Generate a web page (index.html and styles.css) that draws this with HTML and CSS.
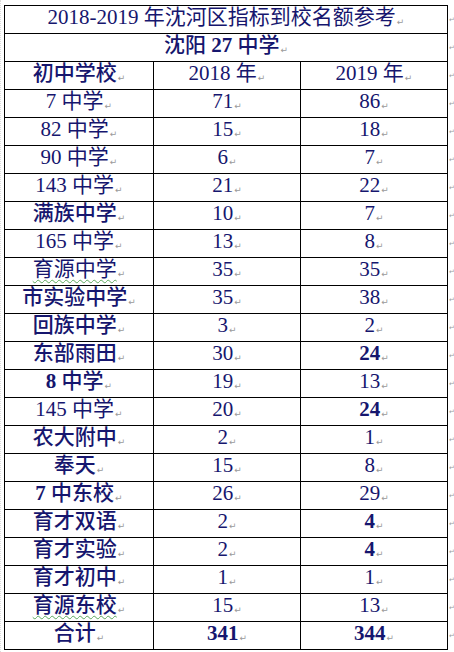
FILE: index.html
```html
<!DOCTYPE html>
<html lang="zh">
<head>
<meta charset="utf-8">
<link rel="stylesheet" href="styles.css">
</head>
<body>
<div class="page">
<table class="sheet">
  <colgroup>
    <col class="c1"><col class="c2"><col class="c3"><col class="c4">
  </colgroup>
  <tr><td colspan="3" class="title">2018-2019 年沈河区指标到校名额参考<span class="pm">↵</span></td><td class="end">↵</td></tr>
  <tr><td colspan="3" class="b">沈阳 <span class="bn">27</span> 中学<span class="pm">↵</span></td><td class="end">↵</td></tr>
  <tr><td class="b">初中学校<span class="pm">↵</span></td><td>2018 年<span class="pm">↵</span></td><td>2019 年<span class="pm">↵</span></td><td class="end">↵</td></tr>
  <tr><td>7 中学<span class="pm">↵</span></td><td>71<span class="pm">↵</span></td><td>86<span class="pm">↵</span></td><td class="end">↵</td></tr>
  <tr><td>82 中学<span class="pm">↵</span></td><td>15<span class="pm">↵</span></td><td>18<span class="pm">↵</span></td><td class="end">↵</td></tr>
  <tr><td>90 中学<span class="pm">↵</span></td><td>6<span class="pm">↵</span></td><td>7<span class="pm">↵</span></td><td class="end">↵</td></tr>
  <tr><td>143 中学<span class="pm">↵</span></td><td>21<span class="pm">↵</span></td><td>22<span class="pm">↵</span></td><td class="end">↵</td></tr>
  <tr><td class="b">满族中学<span class="pm">↵</span></td><td>10<span class="pm">↵</span></td><td>7<span class="pm">↵</span></td><td class="end">↵</td></tr>
  <tr><td>165 中学<span class="pm">↵</span></td><td>13<span class="pm">↵</span></td><td>8<span class="pm">↵</span></td><td class="end">↵</td></tr>
  <tr><td><span class="wavy">育源中学</span><span class="pm">↵</span></td><td>35<span class="pm">↵</span></td><td>35<span class="pm">↵</span></td><td class="end">↵</td></tr>
  <tr><td class="b">市实验中学<span class="pm">↵</span></td><td>35<span class="pm">↵</span></td><td>38<span class="pm">↵</span></td><td class="end">↵</td></tr>
  <tr><td class="b">回族中学<span class="pm">↵</span></td><td>3<span class="pm">↵</span></td><td>2<span class="pm">↵</span></td><td class="end">↵</td></tr>
  <tr><td class="b">东部雨田<span class="pm">↵</span></td><td>30<span class="pm">↵</span></td><td class="bn">24<span class="pm">↵</span></td><td class="end">↵</td></tr>
  <tr><td class="b"><span class="bn">8</span> 中学<span class="pm">↵</span></td><td>19<span class="pm">↵</span></td><td>13<span class="pm">↵</span></td><td class="end">↵</td></tr>
  <tr><td>145 中学<span class="pm">↵</span></td><td>20<span class="pm">↵</span></td><td class="bn">24<span class="pm">↵</span></td><td class="end">↵</td></tr>
  <tr><td class="b">农大附中<span class="pm">↵</span></td><td>2<span class="pm">↵</span></td><td>1<span class="pm">↵</span></td><td class="end">↵</td></tr>
  <tr><td class="b">奉天<span class="pm">↵</span></td><td>15<span class="pm">↵</span></td><td>8<span class="pm">↵</span></td><td class="end">↵</td></tr>
  <tr><td class="b"><span class="bn">7</span> 中东校<span class="pm">↵</span></td><td>26<span class="pm">↵</span></td><td>29<span class="pm">↵</span></td><td class="end">↵</td></tr>
  <tr><td class="b">育才双语<span class="pm">↵</span></td><td>2<span class="pm">↵</span></td><td class="bn">4<span class="pm">↵</span></td><td class="end">↵</td></tr>
  <tr><td class="b">育才实验<span class="pm">↵</span></td><td>2<span class="pm">↵</span></td><td class="bn">4<span class="pm">↵</span></td><td class="end">↵</td></tr>
  <tr><td class="b">育才初中<span class="pm">↵</span></td><td>1<span class="pm">↵</span></td><td>1<span class="pm">↵</span></td><td class="end">↵</td></tr>
  <tr><td class="b"><span class="wavy">育源东校</span><span class="pm">↵</span></td><td>15<span class="pm">↵</span></td><td>13<span class="pm">↵</span></td><td class="end">↵</td></tr>
  <tr><td class="b">合计<span class="pm">↵</span></td><td class="bn">341<span class="pm">↵</span></td><td class="bn">344<span class="pm">↵</span></td><td class="end">↵</td></tr>
</table>
</div>
</body>
</html>
```
FILE: styles.css
```css
html, body {
  margin: 0;
  padding: 0;
  background: #ffffff;
}
.page {
  padding: 5px 0 0 3px;
  border-left: 1px dotted #dcdcdc;
  box-sizing: border-box;
  width: 454px;
  height: 652px;
  overflow: hidden;
}
.sheet {
  border-collapse: collapse;
  table-layout: fixed;
  width: 450px;
  height: 643px;
  font-family: "Liberation Serif", "Noto Sans CJK SC", serif;
  font-size: 21px;
  color: #16166e;
}
.c1 { width: 149px; }
.c2 { width: 147px; }
.c3 { width: 147px; }
.c4 { width: 7px; }
.sheet td {
  border: 1px solid #000;
  padding: 0;
  text-align: center;
  vertical-align: middle;
  line-height: 22px;
  white-space: nowrap;
}
.sheet td.end {
  border: none;
  text-align: left;
  padding-left: 1px;
  font-family: "DejaVu Sans", sans-serif;
  font-size: 7px;
  color: #a0a0a0;
}
.title {
  font-weight: normal;
}
.b {
  font-weight: 500;
}
.bn {
  font-weight: bold;
}
.pm {
  font-family: "DejaVu Sans", sans-serif;
  font-size: 9px;
  font-weight: normal;
  color: #9a9a9a;
  margin-left: 1px;
  vertical-align: -1px;
}
.wavy {
  text-decoration: underline wavy #5ca85c;
  text-decoration-thickness: 1px;
  text-underline-offset: 3px;
}
```
